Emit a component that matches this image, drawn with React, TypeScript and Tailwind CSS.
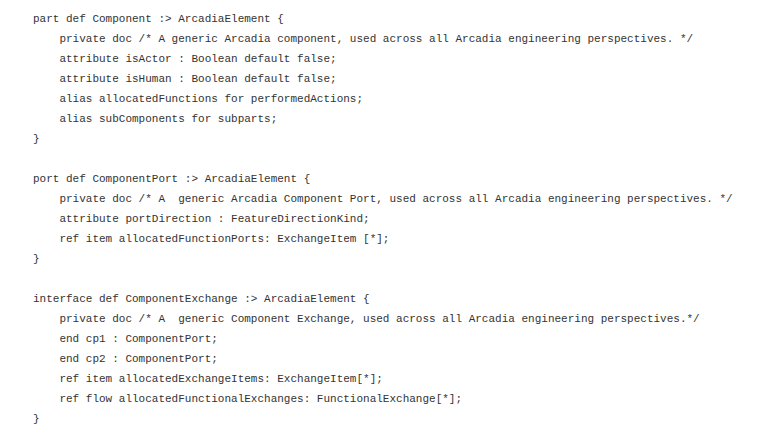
const code = `part def Component :> ArcadiaElement {
    private doc /* A generic Arcadia component, used across all Arcadia engineering perspectives. */
    attribute isActor : Boolean default false;
    attribute isHuman : Boolean default false;
    alias allocatedFunctions for performedActions;
    alias subComponents for subparts;
}

port def ComponentPort :> ArcadiaElement {
    private doc /* A  generic Arcadia Component Port, used across all Arcadia engineering perspectives. */
    attribute portDirection : FeatureDirectionKind;
    ref item allocatedFunctionPorts: ExchangeItem [*];
}

interface def ComponentExchange :> ArcadiaElement {
    private doc /* A  generic Component Exchange, used across all Arcadia engineering perspectives.*/
    end cp1 : ComponentPort;
    end cp2 : ComponentPort;
    ref item allocatedExchangeItems: ExchangeItem[*];
    ref flow allocatedFunctionalExchanges: FunctionalExchange[*];
}`;

export default function App() {
  return (
    <div className="w-[770px] h-[435px] bg-white overflow-hidden">
      <pre className="pt-[9px] pl-[33px] m-0 text-[11px] leading-[20px] text-[#333333] font-['Liberation_Mono','DejaVu_Sans_Mono',monospace]">
        {code}
      </pre>
    </div>
  );
}
